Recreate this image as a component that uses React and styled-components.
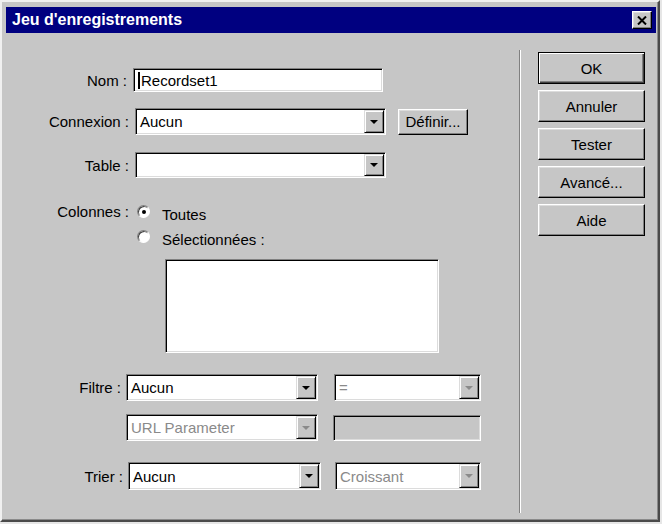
import React from 'react';
import styled, { createGlobalStyle, css } from 'styled-components';

const GlobalStyle = createGlobalStyle`
  html, body {
    margin: 0;
    padding: 0;
    background: #e6e6e6;
  }
  body {
    font-family: "Liberation Sans", Arial, sans-serif;
  }
`;

const Window = styled.div`
  box-sizing: border-box;
  width: 660px;
  height: 522px;
  background: #c6c6c6;
  border: 2px solid;
  border-color: #f0f0f0 #4a4a4a #4a4a4a #f0f0f0;
  box-shadow: inset -1px -1px #8a8a8a;
  padding: 5px 2px 3px 4px;
  display: flex;
  flex-direction: column;
`;

const TitleBar = styled.div`
  height: 26px;
  background: #000080;
  display: flex;
  align-items: center;
  justify-content: space-between;
  padding: 0 4px 0 6px;
`;

const Title = styled.span`
  color: #fff;
  font-weight: bold;
  font-size: 16px;
`;

const CloseButton = styled.span`
  box-sizing: border-box;
  width: 20px;
  height: 18px;
  background: #c6c6c6;
  border: 1px solid;
  border-color: #fff #000 #000 #fff;
  box-shadow: inset -1px -1px #808080, inset 1px 1px #dcdcdc;
  display: flex;
  align-items: center;
  justify-content: center;
`;

const Body = styled.div`
  flex: 1;
  display: flex;
`;

const Form = styled.div`
  width: 513px;
  padding-top: 35px;
  display: flex;
  flex-direction: column;
`;

const Row = styled.div`
  display: flex;
  align-items: center;
  margin-top: ${p => p.$mt || 0}px;
`;

const Label = styled.div`
  box-sizing: border-box;
  width: ${p => p.$w}px;
  padding-right: ${p => p.$gap}px;
  text-align: right;
  font-size: 15px;
  color: #000;
  white-space: nowrap;
`;

const Field = styled.div`
  box-sizing: border-box;
  width: ${p => p.$w}px;
  height: ${p => p.$h || 26}px;
  margin-left: ${p => p.$ml || 0}px;
  background: ${p => (p.$gray ? '#c6c6c6' : '#fff')};
  border: 1px solid;
  border-color: #808080 #fff #fff #808080;
  box-shadow: inset 1px 1px #000, inset -1px -1px #dcdcdc;
  padding: 1px;
  display: flex;
  align-items: stretch;
`;

const FieldText = styled.span`
  flex: 1;
  display: flex;
  align-items: center;
  padding-left: 3px;
  font-size: 15px;
  color: ${p => (p.$disabled ? '#8a8a8a' : '#000')};
  white-space: nowrap;
  overflow: hidden;
`;

const Caret = styled.span`
  width: 2px;
  height: 17px;
  background: #000;
  margin-right: 1px;
`;

const ArrowButton = styled.span`
  box-sizing: border-box;
  width: 20px;
  background: #c6c6c6;
  border: 1px solid;
  border-color: #dcdcdc #000 #000 #dcdcdc;
  box-shadow: inset 1px 1px #fff, inset -1px -1px #808080;
  display: flex;
  align-items: center;
  justify-content: center;

  &::after {
    content: '';
    border-left: 4px solid transparent;
    border-right: 4px solid transparent;
    border-top: 4px solid ${p => (p.$disabled ? '#8a8a8a' : '#000')};
  }
`;

const PushButton = styled.button`
  box-sizing: border-box;
  width: ${p => p.$w || 107}px;
  height: ${p => p.$h || 32}px;
  margin-left: ${p => p.$ml || 0}px;
  padding: 0;
  font: 15px "Liberation Sans", Arial, sans-serif;
  color: #000;
  background: #c6c6c6;
  border: 1px solid;
  border-color: #fff #000 #000 #fff;
  box-shadow: inset -1px -1px #808080, inset 1px 1px #dcdcdc;

  ${p => p.$default && css`
    border-color: #000;
    box-shadow: inset 1px 1px #fff, inset -1px -1px #404040, inset -2px -2px #808080;
  `}
`;

const Radio = styled.span`
  box-sizing: border-box;
  width: 13px;
  height: 13px;
  margin-left: ${p => p.$ml || 0}px;
  border-radius: 50%;
  background: #fff;
  border: 1px solid;
  border-color: #808080 #fff #fff #808080;
  box-shadow: inset 1px 1px #404040;
  display: flex;
  align-items: center;
  justify-content: center;

  &::after {
    content: '';
    width: 4px;
    height: 4px;
    border-radius: 50%;
    background: ${p => (p.$checked ? '#000' : 'transparent')};
  }
`;

const RadioText = styled.span`
  margin-left: 12px;
  font-size: 15px;
  color: #000;
  position: relative;
  top: 3px;
`;

const Separator = styled.div`
  width: 0;
  border-left: 1px solid #808080;
  border-right: 1px solid #fff;
  margin: 17px 0 4px;
`;

const ButtonColumn = styled.div`
  margin-left: 17px;
  padding-top: 19px;
  display: flex;
  flex-direction: column;
  gap: 6px;
`;

const Combo = ({ w, h, ml, value, disabled }) => (
  <Field $w={w} $h={h} $ml={ml}>
    <FieldText $disabled={disabled}>{value}</FieldText>
    <ArrowButton $disabled={disabled} />
  </Field>
);

const CloseIcon = () => (
  <svg width="10" height="9" viewBox="0 0 10 9">
    <path d="M1 0.5 L9 8.5 M9 0.5 L1 8.5" stroke="#000" strokeWidth="2" fill="none" />
  </svg>
);

export default function App() {
  return (
    <>
      <GlobalStyle />
      <Window>
        <TitleBar>
          <Title>Jeu d'enregistrements</Title>
          <CloseButton>
            <CloseIcon />
          </CloseButton>
        </TitleBar>
        <Body>
          <Form>
            <Row>
              <Label $w={127} $gap={6}>Nom :</Label>
              <Field $w={250} $h={24}>
                <FieldText>
                  <Caret />
                  Recordset1
                </FieldText>
              </Field>
            </Row>
            <Row $mt={16}>
              <Label $w={129} $gap={6}>Connexion :</Label>
              <Combo w={251} h={27} value="Aucun" />
              <PushButton $w={70} $h={26} $ml={12}>Définir...</PushButton>
            </Row>
            <Row $mt={17}>
              <Label $w={129} $gap={6}>Table :</Label>
              <Combo w={251} h={26} value="" />
            </Row>
            <Row $mt={25}>
              <Label $w={129} $gap={6}>Colonnes :</Label>
              <Radio $checked $ml={2} />
              <RadioText>Toutes</RadioText>
            </Row>
            <Row $mt={8}>
              <Label $w={129} $gap={6} />
              <Radio $ml={2} />
              <RadioText>Sélectionnées :</RadioText>
            </Row>
            <Row $mt={14}>
              <Field $w={274} $h={94} $ml={159} />
            </Row>
            <Row $mt={21}>
              <Label $w={120} $gap={5}>Filtre :</Label>
              <Combo w={192} h={27} value="Aucun" />
              <Combo w={147} h={27} ml={16} value="=" disabled />
            </Row>
            <Row $mt={13}>
              <Label $w={120} $gap={5} />
              <Combo w={192} h={27} value="URL Parameter" disabled />
              <Field $w={148} $h={26} $ml={15} $gray />
            </Row>
            <Row $mt={21}>
              <Label $w={122} $gap={5}>Trier :</Label>
              <Combo w={193} h={28} value="Aucun" />
              <Combo w={146} h={28} ml={14} value="Croissant" disabled />
            </Row>
          </Form>
          <Separator />
          <ButtonColumn>
            <PushButton $default>OK</PushButton>
            <PushButton>Annuler</PushButton>
            <PushButton>Tester</PushButton>
            <PushButton>Avancé...</PushButton>
            <PushButton>Aide</PushButton>
          </ButtonColumn>
        </Body>
      </Window>
    </>
  );
}
